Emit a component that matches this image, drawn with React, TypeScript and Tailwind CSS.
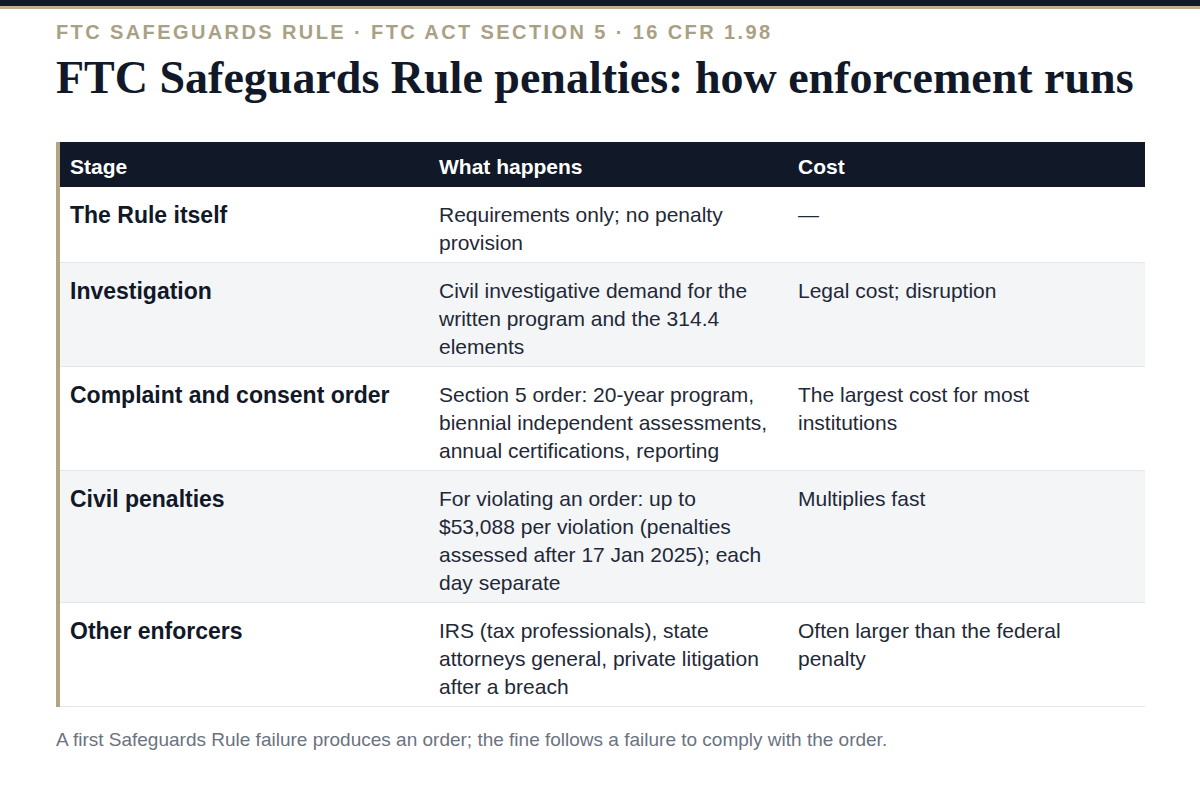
import React from "react";

const rows = [
  {
    stage: "The Rule itself",
    what: "Requirements only; no penalty provision",
    cost: "—",
    alt: false,
  },
  {
    stage: "Investigation",
    what: "Civil investigative demand for the written program and the 314.4 elements",
    cost: "Legal cost; disruption",
    alt: true,
  },
  {
    stage: "Complaint and consent order",
    what: "Section 5 order: 20-year program, biennial independent assessments, annual certifications, reporting",
    cost: "The largest cost for most institutions",
    alt: false,
  },
  {
    stage: "Civil penalties",
    what: "For violating an order: up to $53,088 per violation (penalties assessed after 17 Jan 2025); each day separate",
    cost: "Multiplies fast",
    alt: true,
  },
  {
    stage: "Other enforcers",
    what: "IRS (tax professionals), state attorneys general, private litigation after a breach",
    cost: "Often larger than the federal penalty",
    alt: false,
  },
];

export default function App() {
  return (
    <div className="w-[1200px] h-[810px] bg-white font-['Liberation_Sans',Arial,sans-serif]">
      <div className="h-[6px] bg-[#111827]" />
      <div className="h-[3px] bg-[#bcae8f]" />
      <div className="px-[56px]">
        <div className="mt-[11px] text-[20px] leading-[24px] font-bold tracking-[0.12em] text-[#a9a184] uppercase">
          FTC Safeguards Rule · FTC Act Section 5 · 16 CFR 1.98
        </div>
        <h1 className="mt-[7px] font-['Liberation_Serif','Times_New_Roman',serif] font-bold text-[46px] leading-[54px] text-[#111827]">
          FTC Safeguards Rule penalties: how enforcement runs
        </h1>
        <div className="mt-[37px] w-[1089px] border-l-[4px] border-[#b3a584]">
          <table className="w-[1085px] table-fixed border-separate border-spacing-0">
            <colgroup>
              <col className="w-[369px]" />
              <col className="w-[359px]" />
              <col className="w-[357px]" />
            </colgroup>
            <thead>
              <tr className="bg-[#111827] text-white text-left">
                <th className="pl-[10px] pr-[20px] pt-[11px] pb-[6px] text-[21px] leading-[28px] font-bold">Stage</th>
                <th className="pl-[10px] pr-[20px] pt-[11px] pb-[6px] text-[21px] leading-[28px] font-bold">What happens</th>
                <th className="pl-[10px] pr-[20px] pt-[11px] pb-[6px] text-[21px] leading-[28px] font-bold">Cost</th>
              </tr>
            </thead>
            <tbody>
              {rows.map((r) => (
                <tr
                  key={r.stage}
                  className={(r.alt ? "bg-[#f3f5f7]" : "bg-white") + " align-top"}
                >
                  <td className="pl-[10px] pr-[20px] pt-[14px] pb-[5px] border-b border-[#e3e5e8] text-[23px] leading-[28px] font-bold text-[#111827]">
                    {r.stage}
                  </td>
                  <td className="pl-[10px] pr-[20px] pt-[14px] pb-[5px] border-b border-[#e3e5e8] text-[21px] leading-[28px] text-[#1f2937]">
                    {r.what}
                  </td>
                  <td className="pl-[10px] pr-[20px] pt-[14px] pb-[5px] border-b border-[#e3e5e8] text-[21px] leading-[28px] text-[#1f2937]">
                    {r.cost}
                  </td>
                </tr>
              ))}
            </tbody>
          </table>
        </div>
        <p className="mt-[20px] text-[19px] leading-[26px] text-[#6b7280]">
          A first Safeguards Rule failure produces an order; the fine follows a failure to comply with the order.
        </p>
      </div>
    </div>
  );
}
